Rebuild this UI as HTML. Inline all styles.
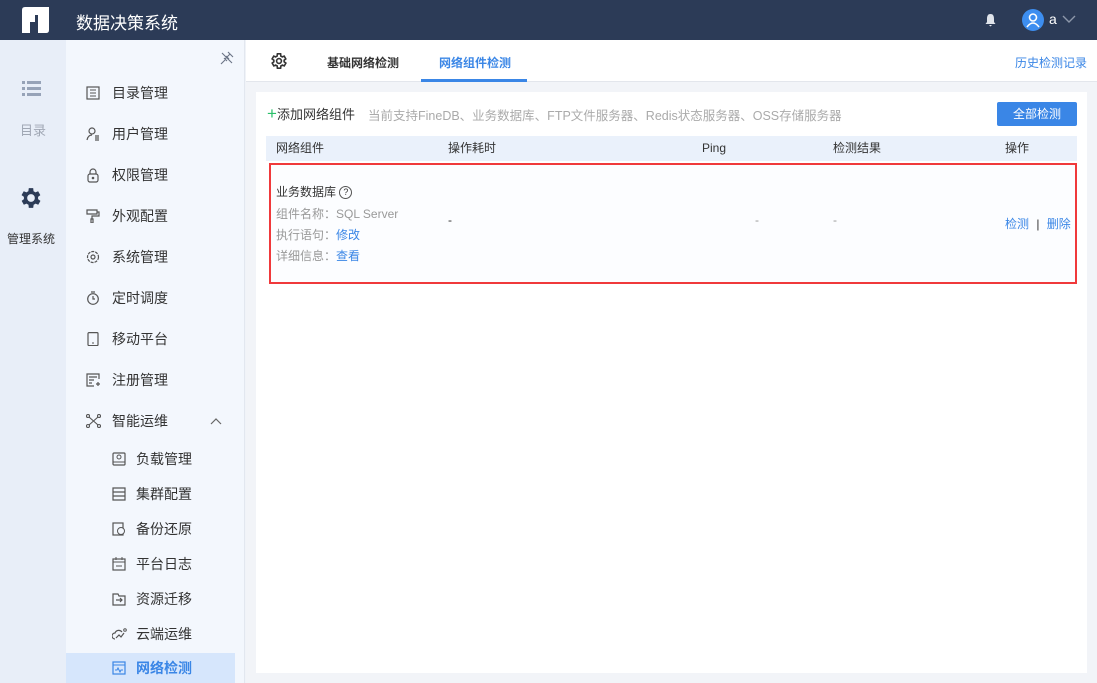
<!DOCTYPE html>
<html><head><meta charset="utf-8"><style>
*{margin:0;padding:0;box-sizing:border-box}
body{width:1097px;height:683px;overflow:hidden;font-family:"Liberation Sans","Noto Sans CJK SC",sans-serif;font-size:13px;color:#333;background:#f0f3f8;position:relative}
.top{position:absolute;left:0;top:0;width:1097px;height:40px;background:#2c3b57}
.rail{position:absolute;left:0;top:40px;width:66px;height:643px;background:#e8eef8}
.side{position:absolute;left:66px;top:40px;width:179px;height:643px;background:#f3f7fd;border-right:1px solid #e2e7ef}
.item{position:absolute;left:0;height:36px;line-height:36px;font-size:14px;color:#333;width:169px}
.item svg{position:absolute;top:11px}
.main{position:absolute;left:246px;top:40px;width:851px;height:643px;background:#f2f4f8}
.tabs{position:absolute;left:0;top:0;width:851px;height:42px;background:#fff;border-bottom:1px solid #e3e6ec}
.panel{position:absolute;left:10px;top:52px;width:831px;height:581px;background:#fff}
.abs{position:absolute}
.g{color:#999}
.b{color:#3a86e6}
</style></head><body>
<div class="top">
 <svg class="abs" style="left:22px;top:7px" width="27" height="26" viewBox="0 0 27 26"><path d="M3 0 L27 0 L27 23 Q27 26 24 26 L16 26 L16 15 L8 15 L8 26 L0 26 L0 3 Q0 0 3 0 Z M13 8 L13 15 L16 15 L16 8 Z" fill="#fff" fill-rule="evenodd"/></svg>
 <div class="abs" style="left:76px;top:9px;color:#fff;font-size:17px">数据决策系统</div>
 <svg class="abs" style="left:984px;top:13px" width="13" height="14" viewBox="0 0 13 14"><path d="M6.5 1 C3.5 1 3 3.5 3 6 L3 9 L1.5 11 L11.5 11 L10 9 L10 6 C10 3.5 9.5 1 6.5 1Z M5 12 L8 12 L6.5 13.5Z" fill="#dfe3ea"/></svg>
 <div class="abs" style="left:1022px;top:9px;width:22px;height:22px;border-radius:50%;background:#3d8ef0"></div>
 <svg class="abs" style="left:1022px;top:9px" width="22" height="22" viewBox="0 0 22 22"><circle cx="11" cy="8.5" r="3.5" fill="none" stroke="#fff" stroke-width="1.6"/><path d="M5 18 Q11 10 17 18" fill="none" stroke="#fff" stroke-width="1.6"/></svg>
 <div class="abs" style="left:1049px;top:11px;color:#fff;font-size:14px">a</div>
 <svg class="abs" style="left:1062px;top:15px" width="14" height="9"><path d="M1 1 L7 7 L13 1" fill="none" stroke="#8d97aa" stroke-width="1.4"/></svg>
</div>
<div class="rail">
 <svg class="abs" style="left:22px;top:41px" width="19" height="15"><g fill="#97a3b8"><rect x="0" y="0" width="3" height="3"/><rect x="5" y="0" width="14" height="3"/><rect x="0" y="6" width="3" height="3"/><rect x="5" y="6" width="14" height="3"/><rect x="0" y="12" width="3" height="3"/><rect x="5" y="12" width="14" height="3"/></g></svg>
 <div class="abs g" style="left:20px;top:80px;font-size:13px;color:#a0a7b4">目录</div>
 <svg class="abs" style="left:20px;top:147px" width="22" height="22" viewBox="2 2 20 20"><path fill="#2c3b57" fill-rule="evenodd" d="M19.4 13a7.5 7.5 0 0 0 0-2l2.1-1.6-2-3.5-2.5 1a7.7 7.7 0 0 0-1.7-1L15 3h-4l-.4 2.9a7.7 7.7 0 0 0-1.7 1l-2.5-1-2 3.5L6.6 11a7.5 7.5 0 0 0 0 2l-2.1 1.6 2 3.5 2.5-1a7.7 7.7 0 0 0 1.700 1L11 21h4l.4-2.9a7.7 7.7 0 0 0 1.7-1l2.5 1 2-3.5zM13 15.5a3.5 3.5 0 1 1 0-7 3.5 3.5 0 0 1 0 7z" transform="translate(-1 0)"/></svg>
 <div class="abs" style="left:7px;top:190px;font-size:12px;color:#333">管理系统</div>
</div>
<div class="side">
 <svg class="abs" style="left:154px;top:11px" width="14" height="14"><path d="M8 1 L13 6 M10 3 L5 8 M6 5 L9 8 M4 7 L7 10 M5 9 L1 13 M2 2 L12 12" fill="none" stroke="#6b7486" stroke-width="1.1"/></svg>
 <div class="item" style="top:35px"><svg style="left:20px" width="14" height="14"><rect x="1" y="1" width="12" height="12" fill="none" stroke="#555" stroke-width="1.2"/><path d="M4 4h6M4 7h6M4 10h6" stroke="#555"/></svg><span style="position:absolute;left:46px">目录管理</span></div>
 <div class="item" style="top:76px"><svg style="left:20px" width="14" height="14"><circle cx="6" cy="4" r="3" fill="none" stroke="#555" stroke-width="1.2"/><path d="M1 13 Q2 8 6 8 M9 9h4M9 11h4M9 13h4" fill="none" stroke="#555" stroke-width="1.2"/></svg><span style="position:absolute;left:46px">用户管理</span></div>
 <div class="item" style="top:117px"><svg style="left:20px" width="14" height="15"><path d="M4 6V4a3 3 0 0 1 6 0v2" fill="none" stroke="#555" stroke-width="1.2"/><rect x="2" y="6" width="10" height="8" rx="2" fill="none" stroke="#555" stroke-width="1.2"/><circle cx="7" cy="10" r="1.3" fill="#555"/></svg><span style="position:absolute;left:46px">权限管理</span></div>
 <div class="item" style="top:158px"><svg style="left:20px" width="14" height="14"><path d="M1 1h10v4H1zM11 3h2v4H6v3M5 10h2v4H5z" fill="none" stroke="#555" stroke-width="1.2"/></svg><span style="position:absolute;left:46px">外观配置</span></div>
 <div class="item" style="top:199px"><svg style="left:20px" width="14" height="14"><circle cx="7" cy="7" r="5.5" fill="none" stroke="#555" stroke-width="1.2" stroke-dasharray="3 1"/><circle cx="7" cy="7" r="2" fill="none" stroke="#555" stroke-width="1.2"/></svg><span style="position:absolute;left:46px">系统管理</span></div>
 <div class="item" style="top:240px"><svg style="left:20px" width="14" height="14"><circle cx="7" cy="8" r="5.3" fill="none" stroke="#555" stroke-width="1.2"/><path d="M5 1h4M7 5v3h2" fill="none" stroke="#555" stroke-width="1.2"/></svg><span style="position:absolute;left:46px">定时调度</span></div>
 <div class="item" style="top:281px"><svg style="left:20px" width="14" height="14"><rect x="2" y="0.6" width="10" height="13" rx="1" fill="none" stroke="#555" stroke-width="1.2"/><path d="M6 11h2" stroke="#555"/></svg><span style="position:absolute;left:46px">移动平台</span></div>
 <div class="item" style="top:322px"><svg style="left:20px" width="14" height="14"><path d="M13 6V1H1v12h7M3 4h8M3 7h5M3 10h3M10 11h4M12 9v4" fill="none" stroke="#555" stroke-width="1.2"/></svg><span style="position:absolute;left:46px">注册管理</span></div>
 <div class="item" style="top:363px"><svg style="left:20px" width="15" height="14"><g fill="none" stroke="#555" stroke-width="1.1"><circle cx="2" cy="2" r="1.5"/><circle cx="13" cy="2" r="1.5"/><circle cx="2" cy="12" r="1.5"/><circle cx="13" cy="12" r="1.5"/><path d="M3 3l9 8M12 3l-9 8"/></g></svg><span style="position:absolute;left:46px">智能运维</span><svg style="left:144px;top:15px" width="12" height="7"><path d="M1 6l5-5 5 5" fill="none" stroke="#666" stroke-width="1.2"/></svg></div>
 <div class="item" style="top:401px"><svg style="left:46px" width="14" height="14"><rect x="1" y="1" width="12" height="12" rx="1" fill="none" stroke="#555" stroke-width="1.2"/><circle cx="7" cy="5" r="2" fill="none" stroke="#555"/><path d="M1 10h12" stroke="#555"/></svg><span style="position:absolute;left:70px">负载管理</span></div>
 <div class="item" style="top:436px"><svg style="left:46px" width="14" height="14"><path d="M1 1h12v4H1zM1 5h12v4H1zM1 9h12v4H1z" fill="none" stroke="#555" stroke-width="1.2"/></svg><span style="position:absolute;left:70px">集群配置</span></div>
 <div class="item" style="top:471px"><svg style="left:46px" width="14" height="14"><rect x="1" y="1" width="10" height="12" fill="none" stroke="#555" stroke-width="1.2"/><circle cx="9" cy="9" r="3.5" fill="#f3f7fd" stroke="#555"/></svg><span style="position:absolute;left:70px">备份还原</span></div>
 <div class="item" style="top:506px"><svg style="left:46px" width="14" height="14"><rect x="1" y="2" width="12" height="11" fill="none" stroke="#555" stroke-width="1.2"/><path d="M1 5h12M4 0v3M10 0v3M4 9h6" stroke="#555"/></svg><span style="position:absolute;left:70px">平台日志</span></div>
 <div class="item" style="top:541px"><svg style="left:46px" width="14" height="14"><path d="M1 2h5l1 2h6v9H1z M4 8h6M8 6l2 2-2 2" fill="none" stroke="#555" stroke-width="1.2"/></svg><span style="position:absolute;left:70px">资源迁移</span></div>
 <div class="item" style="top:576px"><svg style="left:46px" width="15" height="14"><path d="M3 12a3 3 0 0 1 0-6 4 4 0 0 1 7-1M4 11l3-3 2 2 3-4" fill="none" stroke="#555" stroke-width="1.2"/><circle cx="13" cy="3" r="1.3" fill="none" stroke="#555"/></svg><span style="position:absolute;left:70px">云端运维</span></div>
 <div class="item" style="top:613px;left:0;width:169px;height:30px;line-height:30px;background:#d6e6fc;color:#3a86e6;font-weight:bold"><svg style="left:46px;top:8px" width="14" height="14"><rect x="1" y="1" width="12" height="12" fill="none" stroke="#3a86e6" stroke-width="1.2"/><path d="M1 4h12M3 9h2l1-2 2 4 1-2h2" fill="none" stroke="#3a86e6"/></svg><span style="position:absolute;left:70px">网络检测</span></div>
</div>
<div class="abs" style="left:249px;top:356px;width:3px;height:12px;border-left:1px dotted #999;border-right:1px dotted #999"></div>
<div class="main">
 <div class="tabs">
  <svg class="abs" style="left:25px;top:13px" width="16" height="16" viewBox="2 2 20 20"><path fill="none" stroke="#333" stroke-width="2" d="M19.4 13a7.5 7.5 0 0 0 0-2l2.1-1.6-2-3.5-2.5 1a7.7 7.7 0 0 0-1.7-1L15 3h-4l-.4 2.9a7.7 7.7 0 0 0-1.7 1l-2.5-1-2 3.5L6.6 11a7.5 7.5 0 0 0 0 2l-2.1 1.6 2 3.5 2.5-1a7.7 7.7 0 0 0 1.7 1L11 21h4l.4-2.9a7.7 7.7 0 0 0 1.7-1l2.5 1 2-3.5z" transform="translate(-1 0)"/><circle cx="12" cy="12" r="3" fill="none" stroke="#333" stroke-width="2"/></svg>
  <div class="abs" style="left:81px;top:14px;font-size:12px;font-weight:bold;color:#333">基础网络检测</div>
  <div class="abs" style="left:193px;top:14px;font-size:12px;font-weight:bold;color:#3a86e6">网络组件检测</div>
  <div class="abs" style="left:175px;top:39px;width:106px;height:3px;background:#3a86e6"></div>
  <div class="abs b" style="left:769px;top:14px;font-size:12px">历史检测记录</div>
 </div>
 <div class="panel">
  <div class="abs" style="left:11px;top:12px;font-size:13px;color:#333"><span style="color:#2bc06a;font-size:17px;line-height:14px">+</span>添加网络组件</div>
  <div class="abs g" style="left:112px;top:13px;font-size:12.5px;color:#aaa">当前支持FineDB、业务数据库、FTP文件服务器、Redis状态服务器、OSS存储服务器</div>
  <div class="abs" style="left:741px;top:10px;width:80px;height:24px;background:#3a86e6;border-radius:2px;color:#fff;font-size:12px;text-align:center;line-height:24px">全部检测</div>
  <div class="abs" style="left:10px;top:44px;width:811px;height:25px;background:#eaf1fb;font-size:12px;line-height:25px">
   <span class="abs" style="left:10px">网络组件</span><span class="abs" style="left:182px">操作耗时</span><span class="abs" style="left:436px">Ping</span><span class="abs" style="left:567px">检测结果</span><span class="abs" style="left:739px">操作</span>
  </div>
  <div class="abs" style="left:13px;top:71px;width:808px;height:121px;border:2px solid #f0393b;background:#fcfdff;font-size:12px">
   <div class="abs" style="left:5px;top:18px;color:#333">业务数据库 <span style="display:inline-block;width:13px;height:13px;border:1px solid #555;border-radius:50%;font-size:9px;line-height:11px;text-align:center;vertical-align:1px">?</span></div>
   <div class="abs g" style="left:5px;top:40px">组件名称：SQL Server</div>
   <div class="abs g" style="left:5px;top:61px">执行语句：<span class="b">修改</span></div>
   <div class="abs g" style="left:5px;top:82px">详细信息：<span class="b">查看</span></div>
   <div class="abs" style="left:177px;top:48px">-</div>
   <div class="abs g" style="left:484px;top:48px">-</div>
   <div class="abs g" style="left:562px;top:48px">-</div>
   <div class="abs b" style="left:734px;top:50px">检测 <span style="color:#333;margin:0 4px">|</span> 删除</div>
  </div>
 </div>
</div>
</body></html>
